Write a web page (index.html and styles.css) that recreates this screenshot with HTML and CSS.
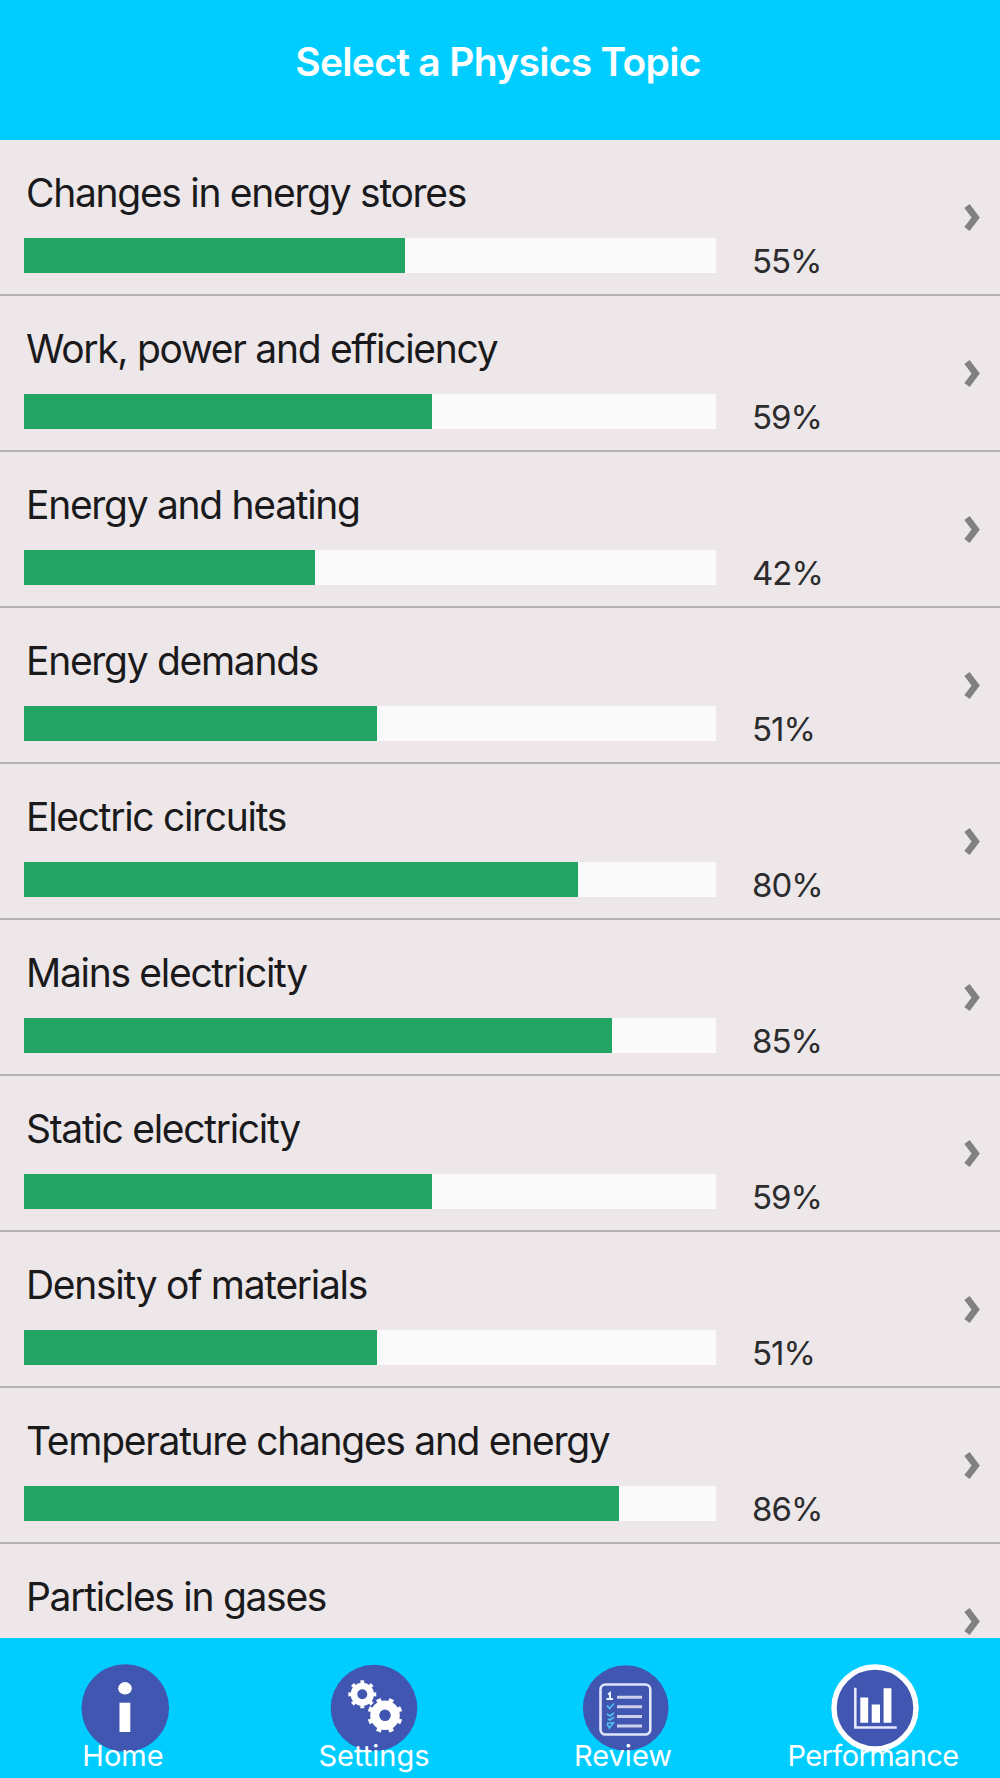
FILE: index.html
```
<!DOCTYPE html>
<html lang="en">
<head>
    <meta charset="UTF-8">
    <meta name="viewport" content="width=device-width, initial-scale=1.0">
    <title>Select a Physics Topic</title>
    <link rel="stylesheet" href="styles.css">
</head>
<body>
    <header>
        <h1>Select a Physics Topic</h1>
    </header>

    <main class="topics" id="topics"></main>

    <nav class="tab-bar">
        <a class="tab home">
            <svg viewBox="0 0 88 88">
                <circle class="disc" cx="44.3" cy="44" r="43.8"/>
                <ellipse class="solid" cx="44" cy="24.3" rx="6.8" ry="6.2"/>
                <rect class="solid" x="38.5" y="38.7" width="10.8" height="29.3"/>
            </svg>
            <span>Home</span>
        </a>
        <a class="tab settings">
            <svg viewBox="0 0 88 88">
                <circle class="disc" cx="43" cy="44" r="43.3"/>
                <g class="gear">
                    <circle cx="31.3" cy="30.3" r="8.3" stroke-width="6.6"/>
                    <circle cx="31.3" cy="30.3" r="12.4" stroke-width="3.2" pathLength="80" stroke-dasharray="4 6" stroke-dashoffset="2"/>
                    <circle cx="54" cy="51.3" r="10.3" stroke-width="9"/>
                    <circle cx="54" cy="51.3" r="15.8" stroke-width="3.6" pathLength="80" stroke-dasharray="3.8 6.2" stroke-dashoffset="-3.1"/>
                </g>
            </svg>
            <span>Settings</span>
        </a>
        <a class="tab review">
            <svg viewBox="0 0 88 88">
                <circle class="disc" cx="44.7" cy="44" r="42.8"/>
                <rect class="sheet" x="19.5" y="20.5" width="49.8" height="50" rx="5"/>
                <path class="lines" d="M36 33.2h25M36 42.8h25M36 52.4h25M36 62h25"/>
                <path class="one" d="M27 30.5l2-1.5v5.5M25.5 35h6.5"/>
                <path class="ticks" d="M26 41.5l2.5 3 4.5-5M26 50l3 2 4-3M27 55l2 1 4-3M26 60l2.5 4 4.5-6M26 59h6"/>
            </svg>
            <span>Review</span>
        </a>
        <a class="tab performance">
            <svg viewBox="0 0 88 88">
                <circle class="disc ring" cx="44" cy="44" r="41"/>
                <path class="axes" d="M24.3 23.7v39.8h41.4"/>
                <path class="solid" d="M29.3 33.5h7.9v25.3h-7.9zM40.7 40.5h8.3v18.3h-8.3zM52.6 24.2h7.8v34.6h-7.8z"/>
            </svg>
            <span>Performance</span>
        </a>
    </nav>

    <script>
        const topics = [
            { name: 'Changes in energy stores', score: 55 },
            { name: 'Work, power and efficiency', score: 59 },
            { name: 'Energy and heating', score: 42 },
            { name: 'Energy demands', score: 51 },
            { name: 'Electric circuits', score: 80 },
            { name: 'Mains electricity', score: 85 },
            { name: 'Static electricity', score: 59 },
            { name: 'Density of materials', score: 51 },
            { name: 'Temperature changes and energy', score: 86 },
            { name: 'Particles in gases' }
        ];

        // Topics without a score only show their name
        function createTopic(topic) {
            const row = document.createElement('div');
            row.className = 'topic';
            const progress = topic.score === undefined ? '' : `
                <div class="progress">
                    <div class="bar"><div class="fill" style="width: ${topic.score}%"></div></div>
                    <span class="score">${topic.score}%</span>
                </div>`;
            row.innerHTML = `
                <div class="info">
                    <h2>${topic.name}</h2>${progress}
                </div>
                <svg class="chevron" viewBox="0 0 16 28"><path d="M2 2L10.7 13.5L2 25"/></svg>
            `;
            return row;
        }

        const list = document.getElementById('topics');
        topics.forEach(topic => list.appendChild(createTopic(topic)));
    </script>
</body>
</html>
```
FILE: styles.css
```
* {
    margin: 0;
    padding: 0;
    box-sizing: border-box;
    font-family: Inter, "Liberation Sans", sans-serif;
}

body {
    display: flex;
    flex-direction: column;
    height: 1778px;
    background-color: #ede7e9;
    overflow: hidden;
}

header {
    height: 140px;
    padding-top: 37px;
    background-color: #00cdff;
    color: #FFF;
    text-align: center;
}

h1 {
    font-size: 39px;
    line-height: 50px;
    font-weight: 600;
    letter-spacing: -0.7px;
    padding-right: 4px;
}

.topics {
    flex: 1;
    min-height: 0;
    overflow: hidden;
}

.topic {
    display: flex;
    justify-content: space-between;
    height: 156px;
    padding: 28px 19px 0 24px;
    border-bottom: 2px solid #b4b1b3;
}

.topic h2 {
    font-size: 39px;
    line-height: 50px;
    font-weight: 400;
    letter-spacing: -1.3px;
    padding-left: 2px;
    color: #1a1a1c;
    white-space: nowrap;
}

.progress {
    display: flex;
    margin-top: 20px;
}

.bar {
    width: 692px;
    height: 35px;
    background-color: #fafafa;
}

.fill {
    height: 100%;
    background-color: #21a464;
}

.score {
    margin-left: 36px;
    padding-top: 4px;
    font-size: 33px;
    line-height: 38px;
    letter-spacing: -1px;
    color: #2c2c2e;
}

.chevron {
    width: 16px;
    height: 28px;
    margin-top: 36px;
    fill: none;
    stroke: #828182;
    stroke-width: 6.6;
    overflow: visible;
}

/* Bottom tab bar */
.tab-bar {
    display: grid;
    grid-template-columns: repeat(4, 1fr);
    height: 140px;
    padding-top: 26px;
    background-color: #00cdff;
}

.tab {
    display: flex;
    flex-direction: column;
    align-items: center;
    color: #FFF;
}

.tab svg {
    width: 88px;
    height: 88px;
    overflow: visible;
}

.tab span {
    z-index: 1;
    margin-top: -16px;
    font-size: 29px;
    line-height: 40px;
    padding-right: 4px;
}

.settings span {
    padding-right: 2px;
}

.performance span {
    letter-spacing: -0.6px;
}

.disc {
    fill: #4156b1;
}

.ring {
    stroke: #FFF;
    stroke-width: 5.4;
}

.solid {
    fill: #FFF;
}

.gear {
    fill: none;
    stroke: #FFF;
}

.sheet {
    fill: none;
    stroke: #dfe6fa;
    stroke-width: 2.6;
}

.lines {
    stroke: #ccd0ec;
    stroke-width: 3;
}

.one {
    fill: none;
    stroke: #e4f4ff;
    stroke-width: 2;
}

.ticks {
    fill: none;
    stroke: #4fc4ee;
    stroke-width: 1.6;
}

.axes {
    fill: none;
    stroke: #e4e8fa;
    stroke-width: 2.6;
}
```
